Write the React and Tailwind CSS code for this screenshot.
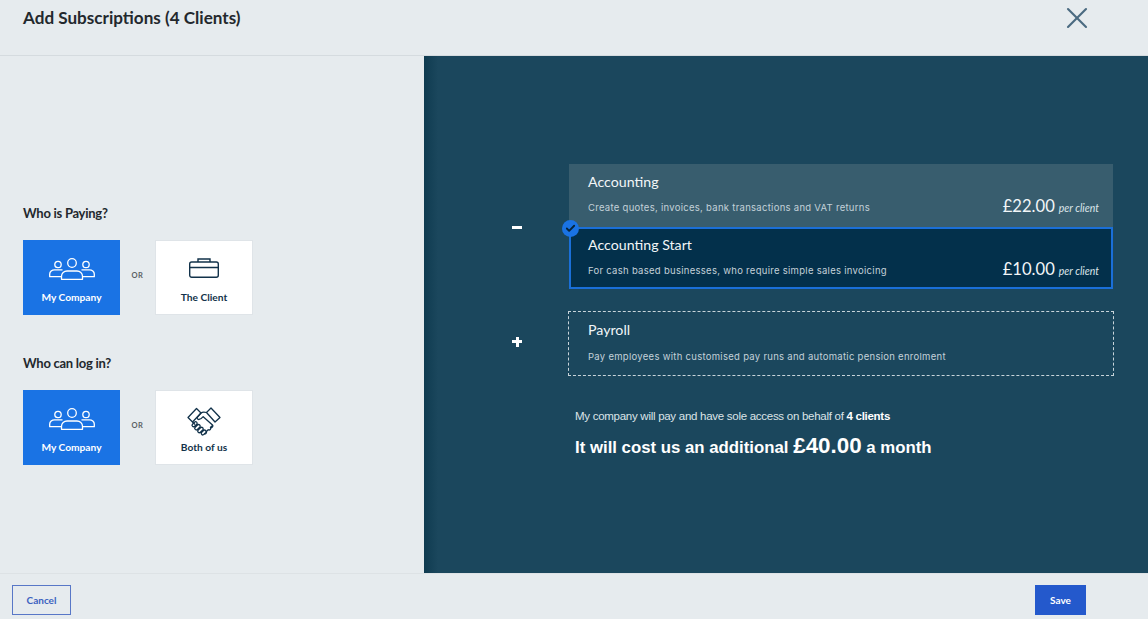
import { X, Check } from "lucide-react";

function PeopleIcon() {
  return (
    <svg aria-hidden="true" className="h-[22px] w-[46px]" viewBox="0 0 46 22" fill="none" stroke="currentColor" strokeWidth="1.3">
      <circle cx="23" cy="5" r="4.300" />
      <circle cx="9" cy="6.500" r="3.200" />
      <circle cx="37" cy="6.500" r="3.200" />
      <path d="M12.500 21.300v-3c0-3 2.500-5.300 5.500-5.300h10c3 0 5.500 2.300 5.500 5.300v3z" strokeLinejoin="round" />
      <path d="M13.500 11.800H5.500c-2.500 0-4.800 2-4.800 4.200v2.700h11.800" strokeLinejoin="round" />
      <path d="M32.500 11.800h8c2.500 0 4.800 2 4.800 4.200v2.700H33.500" strokeLinejoin="round" />
    </svg>
  );
}

function BriefcaseIcon() {
  return (
    <svg aria-hidden="true" className="h-[20px] w-[30px]" viewBox="0 0 30 20" fill="none" stroke="currentColor" strokeWidth="1.4">
      <rect x="0.700" y="4" width="28.600" height="15.300" rx="2" />
      <path d="M0.700 9.500h28.600M9 4V1h12v3" />
    </svg>
  );
}

function HandshakeIcon() {
  return (
    <svg aria-hidden="true" className="-mt-[1px] h-[30px] w-[34px]" viewBox="0 0 34 30" fill="none" stroke="currentColor" strokeWidth="1.300" strokeLinejoin="round">
      <path d="M1 10.500 9.500 1.500l4.500 4.500-8.500 9z" />
      <path d="M33 10.500 24 1l-4.500 4.500 8.500 9.500z" />
      <path d="M19.500 5.500c-2.500-.8-4-.8-5.500.5M14 6l-3.500 4.200c-.8 1 0 2.300 1.200 2.300 1.500 0 3-1 4.500-2.800l9.300 8.300c1.200 1.500-.8 3.300-2.200 2" />
      <path d="M5.500 15 8 17.500M25.800 18.200l-2.300 2.300c1 1.400-.8 3.200-2.300 2.200l-1.800 1.800c.5 1.500-1 2.800-2.500 2.300" />
      <path d="m7.500 15.200-2 2a1.500 1.500 0 0 0 2.200 2.100l2-2a1.500 1.500 0 0 0-2.200-2.100zM10.500 18l-2.300 2.200a1.500 1.500 0 0 0 2.200 2.200l2.300-2.200a1.500 1.500 0 0 0-2.200-2.200zM13.500 20.800l-2.300 2.200a1.500 1.500 0 0 0 2.200 2.200l2.300-2.200a1.500 1.500 0 0 0-2.200-2.200zM16.500 23.500l-1.800 1.800a1.500 1.500 0 0 0 2.200 2.100l1.800-1.800a1.500 1.500 0 0 0-2.200-2.100z" />
    </svg>
  );
}

function ChoiceCard({ active, icon, label }) {
  return (
    <div
      className={`flex h-[75px] flex-col items-center border ${
        active ? "w-[97px] border-[#1a73e4] bg-[#1a73e4] text-white" : "w-[98px] border-[#dfe4e8] bg-white text-[#12324a]"
      }`}
    >
      <div className="flex h-[49px] w-full items-start justify-center pt-[17px]">{icon}</div>
      <div className="font-['Lato'] text-[10.200px] leading-[14px] font-bold">{label}</div>
    </div>
  );
}

function ChoiceGroup({ title, second }) {
  return (
    <div>
      <h2 className="font-['Lato'] text-[13px] leading-[20px] font-bold tracking-[-0.02em] text-[#23282d]">{title}</h2>
      <div className="mt-[17px] flex items-center">
        <ChoiceCard active icon={<PeopleIcon />} label="My Company" />
        <div className="w-[35px] pb-[4px] text-center font-['Lato'] text-[7.500px] font-bold tracking-[0.06em] text-[#5a5f63]">OR</div>
        {second}
      </div>
    </div>
  );
}

function Plan({ name, description, price, className }) {
  return (
    <div className={`flex flex-col text-white ${className}`}>
      <div className="font-['Lato'] text-[14.200px] leading-[20px] text-[#f2f6f8]">{name}</div>
      <div className="mt-[8px] flex items-start justify-between">
        <div className="font-['Inter'] text-[9.500px] leading-[16px] tracking-[0.03em] text-[#c3d1d9]">{description}</div>
        <div className="-mt-[3px] flex items-baseline font-['Lato'] leading-[18px]">
          <span className="text-[16.600px] text-[#f2f6f8]">{price}</span>
          <span className="ml-[4px] text-[10.500px] text-[#dde6ea] italic">per client</span>
        </div>
      </div>
    </div>
  );
}

export default function App() {
  return (
    <div className="flex h-[619px] w-[1148px] flex-col overflow-hidden bg-[#e6ebee]">
      <header className="flex h-[56px] shrink-0 justify-between border-b border-[#d5dbdf] pl-[23px] pr-[53px]">
        <h1 className="pt-[6px] font-['Lato'] text-[17.100px] leading-[24px] font-bold text-[#23282d]">Add Subscriptions (4 Clients)</h1>
        <X className="h-[36px] w-[36px] text-[#4a6a80]" strokeWidth={1.4} />
      </header>

      <main className="flex min-h-0 flex-1">
        <section className="flex w-[424px] shrink-0 flex-col gap-[38px] pl-[23px] pt-[147px]">
          <ChoiceGroup title="Who is Paying?" second={<ChoiceCard icon={<BriefcaseIcon />} label="The Client" />} />
          <ChoiceGroup title="Who can log in?" second={<ChoiceCard icon={<HandshakeIcon />} label="Both of us" />} />
        </section>

        <section className="flex-1 bg-[linear-gradient(90deg,#0f3b50_0px,#1b475d_14px)] pl-[88px] pt-[108px]">
          <div className="flex items-center">
            <div className="mt-[2px] h-[3px] w-[10px] bg-white" />
            <div className="relative ml-[47px] w-[544px]">
              <Plan name="Accounting" description="Create quotes, invoices, bank transactions and VAT returns" price="£22.00" className="h-[63px] bg-[#385d6e] pl-[19px] pr-[14px] pt-[8px]" />
              <Plan name="Accounting Start" description="For cash based businesses, who require simple sales invoicing" price="£10.00" className="h-[62px] border-2 border-[#1a6fd8] bg-[#03304b] pl-[17px] pr-[12px] pt-[6px]" />
              <div className="absolute left-[-7px] top-[56px] flex h-[17px] w-[17px] items-center justify-center rounded-full bg-[#1a73e4]">
                <Check className="h-[11px] w-[11px] text-[#06243a]" strokeWidth={4} />
              </div>
            </div>
          </div>

          <div className="mt-[22px] flex items-center">
            <div className="mb-[4px] flex h-[10px] w-[10px] items-center justify-center">
              <div className="relative h-[3px] w-[10px] bg-white">
                <div className="absolute left-[3.500px] top-[-3.500px] h-[10px] w-[3px] bg-white" />
              </div>
            </div>
            <div className="ml-[46px] h-[65px] w-[546px] border border-dashed border-[#c8d4da] px-[19px]">
              <div className="mt-[8px] font-['Lato'] text-[14.200px] leading-[20px] text-[#f2f6f8]">Payroll</div>
              <div className="mt-[9px] font-['Inter'] text-[9.500px] leading-[16px] tracking-[0.03em] text-[#c3d1d9]">
                Pay employees with customised pay runs and automatic pension enrolment
              </div>
            </div>
          </div>

          <div className="ml-[63px] mt-[32px] font-['Liberation_Sans'] text-white">
            <p className="text-[11.500px] leading-[16px] tracking-[-0.024em] text-[#dbe4e8]">
              My company will pay and have sole access on behalf of <b className="text-white">4 clients</b>
            </p>
            <p className="mt-[7px] flex items-baseline text-[16.800px] leading-[30px] font-bold whitespace-pre">
              It will cost us an additional <span className="text-[22.400px]">£40.00</span> a month
            </p>
          </div>
        </section>
      </main>

      <footer className="flex h-[46px] shrink-0 items-start justify-between border-t border-[#dde2e5] pl-[12px] pr-[62px] pt-[11px]">
        <button className="h-[30px] w-[59px] border border-[#5877c7] font-['Lato'] text-[10px] font-bold text-[#3c62c0]">Cancel</button>
        <button className="h-[30px] w-[51px] bg-[#2459cc] font-['Lato'] text-[10px] font-bold text-white">Save</button>
      </footer>
    </div>
  );
}
